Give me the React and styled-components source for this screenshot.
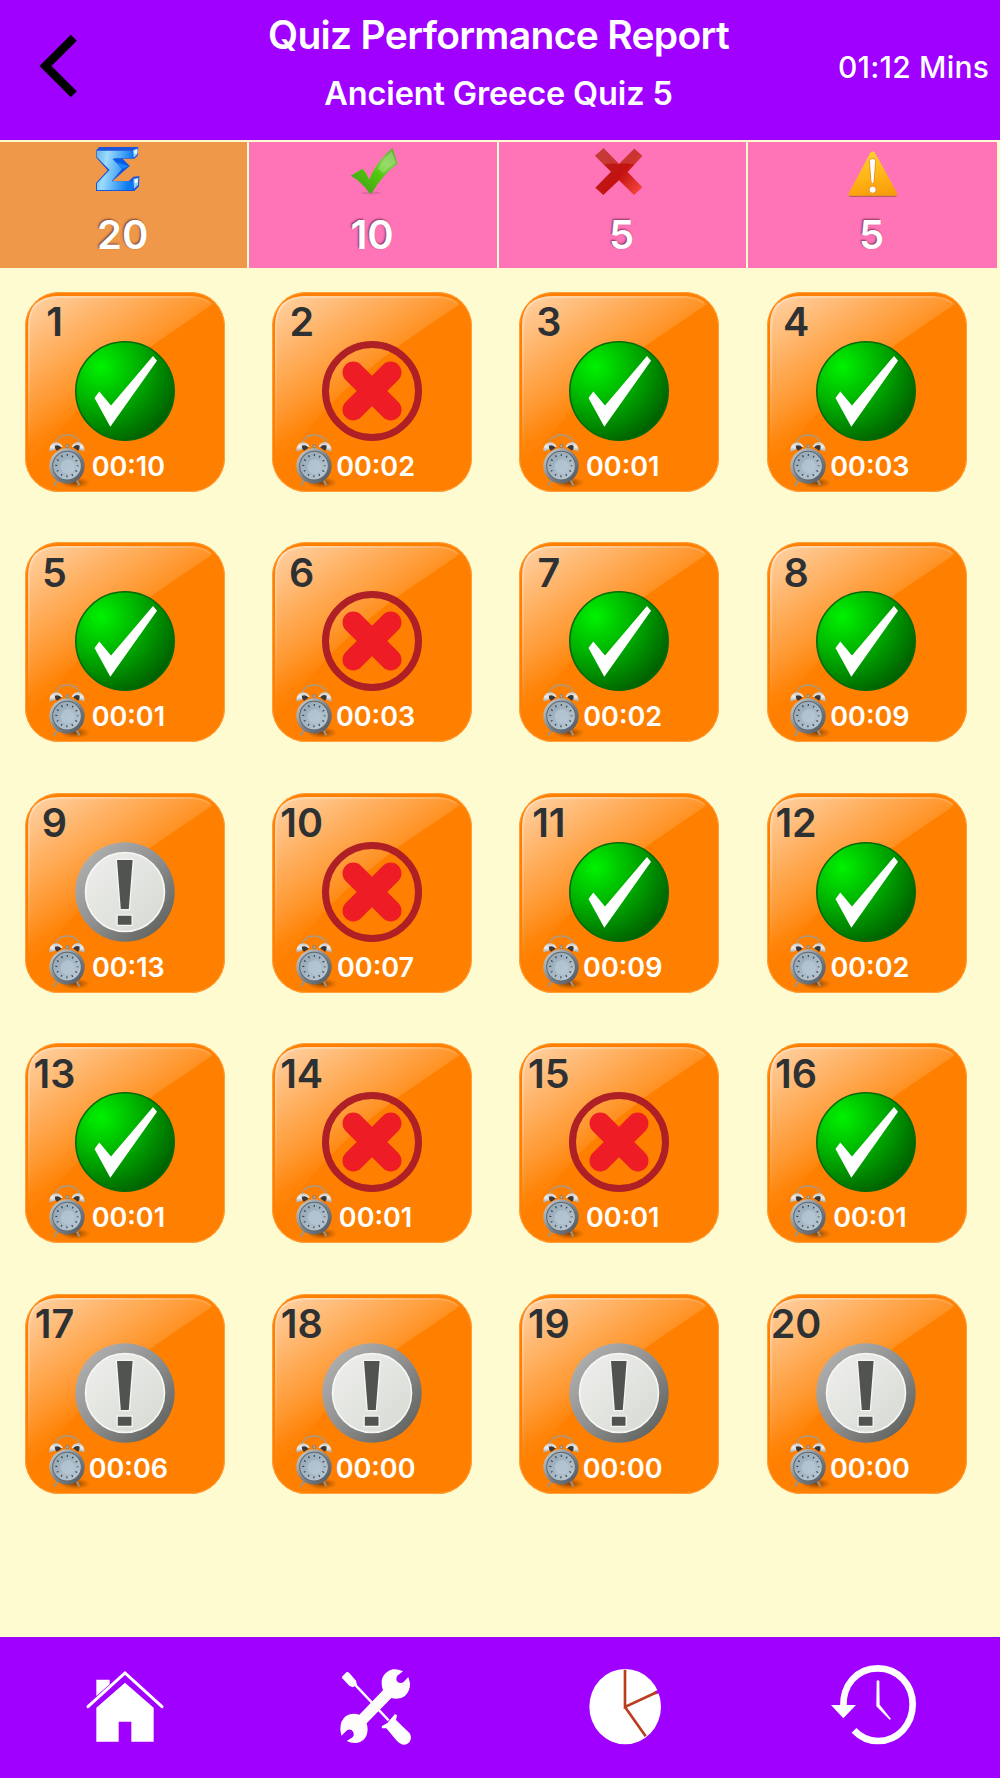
import React from 'react'
import styled, { createGlobalStyle } from 'styled-components';

const GlobalStyle = createGlobalStyle`
    * {
        box-sizing: border-box;
    }
    body {
        margin: 0;
        background-color: #fffbd1;
        font-family: Inter, "Liberation Sans", sans-serif;
    }
`;

const Page = styled.div`
    width: 1000px;
    height: 1778px;
    display: flex;
    flex-direction: column;
    overflow: hidden;
    background-color: #fffbd1;
`;

const Header = styled.header`
    height: 140px;
    flex-shrink: 0;
    display: grid;
    grid-template-columns: 250px 1fr 250px;
    background-color: #a000ff;
    color: white;
`;

const BackButton = styled.div`
    padding: 34px 0 0 38px;

    svg {
        display: block;
    }
`;

const Titles = styled.div`
    display: flex;
    flex-direction: column;
    align-items: center;
    padding: 11px 3px 0 0;
    white-space: nowrap;
`;

const Title = styled.h1`
    margin: 0;
    font-size: 39px;
    line-height: 48px;
    font-weight: 600;
    letter-spacing: -0.7px;
`;

const Subtitle = styled.h2`
    margin: 11px 0 0;
    font-size: 32.5px;
    line-height: 48px;
    font-weight: 600;
    letter-spacing: -0.15px;
`;

const TotalTime = styled.div`
    padding: 49px 11px 0 0;
    font-size: 30px;
    line-height: 36px;
    font-weight: 550;
    letter-spacing: 0.2px;
    text-align: right;
    white-space: nowrap;
`;

const Stats = styled.div`
    width: 997px;
    height: 126px;
    margin-top: 2px;
    flex-shrink: 0;
    display: grid;
    grid-template-columns: repeat(3, 247.4px) 1fr;
    gap: 2px;
`;

const Stat = styled.div`
    display: flex;
    flex-direction: column;
    align-items: center;
    padding-top: 1px;
    background-color: ${props => (props.$active ? '#f0984a' : '#ff74b6')};

    svg {
        display: block;
        flex-shrink: 0;
    }
`;

const StatValue = styled.div`
    margin-top: 12px;
    margin-right: 2px;
    font-size: 40px;
    line-height: 48px;
    font-weight: 600;
    color: white;
    text-shadow: -1px -1px 2px rgba(60,20,40,0.65);
`;

const Grid = styled.main`
    flex: 1;
    display: grid;
    grid-template-columns: repeat(4, 200px);
    grid-auto-rows: 200px;
    column-gap: 47.2px;
    row-gap: 50.45px;
    padding: 24px 0 0 25px;
`;

const Card = styled.div`
    position: relative;
    display: flex;
    flex-direction: column;
    border-radius: 34px;
    overflow: hidden;
    background-color: #ff8000;
`;

const Gloss = styled.svg`
    position: absolute;
    top: 0;
    left: 0;
`;

const Number = styled.div`
    position: relative;
    width: 59px;
    height: 49px;
    padding-top: 6.3px;
    font-size: 39.5px;
    line-height: 48px;
    font-weight: 600;
    text-align: center;
    color: #2d3133;
`;

const Mark = styled.svg`
    position: relative;
    display: block;
    margin-left: 49.6px;
    flex-shrink: 0;
`;

const TimeRow = styled.div`
    position: relative;
    display: flex;
    margin-top: -9.3px;
    padding-left: 19.7px;
`;

const Time = styled.div`
    width: 90px;
    margin-left: -8px;
    padding-top: 19.2px;
    font-size: 27px;
    line-height: 32px;
    font-weight: 600;
    text-align: center;
    color: white;
    white-space: nowrap;
`;

const BottomNav = styled.nav`
    height: 141.5px;
    flex-shrink: 0;
    display: grid;
    grid-template-columns: repeat(4, 1fr);
    place-items: center;
    background-color: #a000ff;
`;

const SigmaIcon = () => (
    <svg width="60" height="56" viewBox="281 428 180 168">
        <path d="M288 449 L297 440 H414 L412 466 L402 475 H366 L388 497 L336 543 H385 L399 529 L417 527 L416 558 L402 572 H287 V548 L322 510 L288 472 Z" fill="#1a55dc" />
        <path d="M290 451 H397 V474 H342 L365 506 L334 543 H398 V569 H290 V549 L328 509 L290 471 Z" fill="url(#sigmaFace)" />
        <path d="M336 475 H366 L388 497 L370 510 Z" fill="#075ce8" />
        <path d="M348 486 L366 491 L384 498 L364 507 Z" fill="#1686fa" />
        <path d="M398 450 L412 444 L410 463 L400 472 Z M399 536 L414 532 L413 554 L401 565 Z" fill="#8ed4ff" />
        <path d="M402 451 l9 -3 v11 l-8 2 z M403 538 l9 -3 v11 l-8 3 z" fill="#f2fbff" />
        <defs>
            <linearGradient id="sigmaFace" x1="0" y1="0" x2="1" y2="0.2">
                <stop offset="0" stopColor="#67b8ed" />
                <stop offset="0.3" stopColor="#9bdcfb" />
                <stop offset="1" stopColor="#0b79ef" />
            </linearGradient>
        </defs>
    </svg>
);

const TickIcon = () => (
    <svg width="60" height="56" viewBox="1029 428 180 168">
        <ellipse cx="1113" cy="578" rx="32" ry="4" fill="#9a5080" opacity="0.3" />
        <path d="M1052 526 L1088 505 Q1100 518 1107 538 Q1132 478 1178 442 L1193 490 Q1148 522 1116 577 Q1109 583 1104 573 Q1082 542 1052 526 Z" fill="url(#tickFill)" />
        <path d="M1134 505 Q1150 474 1175 453 L1187 487 Q1166 501 1151 519 Z" fill="#c6f5a2" opacity="0.35" />
        <defs>
            <linearGradient id="tickFill" x1="1" y1="0" x2="0.3" y2="1">
                <stop offset="0" stopColor="#5aa835" />
                <stop offset="0.35" stopColor="#7ccc4a" />
                <stop offset="0.6" stopColor="#50c80a" />
                <stop offset="1" stopColor="#43a51a" />
            </linearGradient>
        </defs>
    </svg>
);

const CrossIcon = () => (
    <svg width="60" height="56" viewBox="277 428 180 168">
        <path d="M286 466 L312 444 L358 491 L404 445 L428 467 L384 515 L428 561 L403 584 L358 540 L311 584 L287 562 L334 514 Z" fill="url(#crossFill)" />
        <path d="M286 466 L312 444 L358 491 L404 445 L428 467 L405 492 Q360 485 312 492 Z" fill="#d7665c" opacity="0.4" />
        <defs>
            <linearGradient id="crossFill" x1="0" y1="0.2" x2="1" y2="1">
                <stop offset="0" stopColor="#b91f20" />
                <stop offset="0.5" stopColor="#c2120f" />
                <stop offset="1" stopColor="#ff4b43" />
            </linearGradient>
        </defs>
    </svg>
);

const WarningIcon = () => (
    <svg width="60" height="56" viewBox="1028 428 180 168">
        <path d="M1046 585 H1190 L1187 590 H1047 Z" fill="#a05a50" opacity="0.8" />
        <path d="M1110 457 Q1117 448 1124 457 L1190 578 Q1193 586 1184 586 H1050 Q1042 586 1046 577 Z" fill="url(#warnFill)" />
        <path d="M1107 480 Q1117 469 1126 480 L1121 545 Q1117 554 1112 545 Z" fill="white" stroke="#d87610" strokeWidth="2" />
        <circle cx="1117" cy="568" r="10.5" fill="white" stroke="#d87610" strokeWidth="2" />
        <defs>
            <linearGradient id="warnFill" x1="0.4" y1="0" x2="0.6" y2="1">
                <stop offset="0" stopColor="#ffd12c" />
                <stop offset="0.6" stopColor="#ffb314" />
                <stop offset="1" stopColor="#f79c0b" />
            </linearGradient>
        </defs>
    </svg>
);

const CardGloss = () => (
    <Gloss width="200" height="200" viewBox="0 0 200 200">
        <rect x="0.5" y="0.5" width="199" height="199" rx="33.5" fill="none" stroke="#ffa040" strokeWidth="1" />
        <path d="M3 34 Q3 4 34 4 H166 Q180 5 188 12 L132 50 Q80 88 50 122 Q25 150 3 174 Z" fill="url(#gloss)" />
        <path d="M4 165 V34 Q4 5 34 5 H166 Q178 5 185 11" fill="none" stroke="url(#glossEdge)" strokeWidth="2" />
    </Gloss>
);

// gradients used by every card
const CardDefs = () => (
    <svg width="0" height="0" style={{ position: 'absolute' }}>
        <defs>
            <linearGradient id="gloss" gradientUnits="userSpaceOnUse" x1="0" y1="0" x2="86.6" y2="130">
                <stop offset="0" stopColor="white" stopOpacity="0.68" />
                <stop offset="0.35" stopColor="white" stopOpacity="0.42" />
                <stop offset="0.67" stopColor="white" stopOpacity="0.19" />
                <stop offset="0.75" stopColor="white" stopOpacity="0.12" />
                <stop offset="0.84" stopColor="white" stopOpacity="0.04" />
                <stop offset="0.95" stopColor="white" stopOpacity="0" />
            </linearGradient>
            <linearGradient id="glossEdge" gradientUnits="userSpaceOnUse" x1="0" y1="5" x2="60" y2="140">
                <stop offset="0" stopColor="white" stopOpacity="0.3" />
                <stop offset="1" stopColor="white" stopOpacity="0" />
            </linearGradient>
            <radialGradient id="green" cx="0.26" cy="0.25" r="0.82">
                <stop offset="0" stopColor="#00f200" />
                <stop offset="0.45" stopColor="#00b400" />
                <stop offset="1" stopColor="#006200" />
            </radialGradient>
            <linearGradient id="ring" x1="0.1" y1="0.1" x2="0.9" y2="0.9">
                <stop offset="0" stopColor="#b0b0b0" />
                <stop offset="0.5" stopColor="#8e8f8e" />
                <stop offset="1" stopColor="#60625f" />
            </linearGradient>
            <linearGradient id="plate" x1="0" y1="0" x2="1" y2="1">
                <stop offset="0" stopColor="#efefed" />
                <stop offset="1" stopColor="#d6dad2" />
            </linearGradient>
            <linearGradient id="clockRim" x1="0" y1="0" x2="1" y2="1">
                <stop offset="0" stopColor="#d2d6da" />
                <stop offset="0.5" stopColor="#80868c" />
                <stop offset="1" stopColor="#4d5157" />
            </linearGradient>
            <linearGradient id="clockFace" x1="0" y1="0" x2="1" y2="1">
                <stop offset="0" stopColor="#90a4b2" />
                <stop offset="1" stopColor="#bccbd7" />
            </linearGradient>
            <linearGradient id="bell" x1="0" y1="0" x2="0" y2="1">
                <stop offset="0" stopColor="#c4c4c4" />
                <stop offset="0.5" stopColor="#eeeeee" />
                <stop offset="1" stopColor="#9ea2a6" />
            </linearGradient>
            <radialGradient id="clockShadow">
                <stop offset="0" stopColor="#5e2c00" stopOpacity="0.75" />
                <stop offset="1" stopColor="#7c3a00" stopOpacity="0" />
            </radialGradient>
        </defs>
    </svg>
);

const CorrectMark = () => (
    <Mark width="100" height="100" viewBox="0 0 100 100">
        <circle cx="50" cy="50" r="49.2" fill="url(#green)" stroke="#056a04" strokeWidth="1.6" />
        <path d="M19.5 57 L24.3 50.5 L36 64.5 L78 15 L82 19.7 L35.3 85.7 Z" fill="white" />
    </Mark>
);

const WrongMark = () => (
    <Mark width="100" height="100" viewBox="0 0 100 100">
        <circle cx="50" cy="50" r="46.5" fill="none" stroke="#ae1f26" strokeWidth="7" />
        <path d="M31.3 31.3 L68.7 68.7 M68.7 31.3 L31.3 68.7" stroke="#ee1d25" strokeWidth="21.6" strokeLinecap="round" />
    </Mark>
);

const SkippedMark = () => (
    <Mark width="100" height="100" viewBox="0 0 100 100">
        <circle cx="50" cy="50" r="49.7" fill="url(#ring)" />
        <circle cx="50" cy="50" r="39.5" fill="url(#plate)" stroke="#f6f7f4" strokeWidth="1.6" />
        <path d="M42 18 H57.6 L53.8 67 H45.8 Z M42.8 73.7 H56.5 V82.8 H42.8 Z" fill="#50534f" stroke="#f5f6f3" strokeWidth="2.6" paintOrder="stroke" />
    </Mark>
);

const MARKS = {
    correct: CorrectMark,
    wrong: WrongMark,
    skipped: SkippedMark,
};

const ClockIcon = () => (
    <svg width="46.7" height="56.7" viewBox="105 455 140 170">
        <ellipse cx="195" cy="607" rx="46" ry="17" fill="url(#clockShadow)" />
        <path d="M136 487 Q144 464 171 464 Q200 464 209 487" fill="none" stroke="#a99a84" strokeWidth="4" />
        <path d="M144 596 L133 614 M198 596 L207 613" stroke="#9a948c" strokeWidth="6" strokeLinecap="round" />
        <path d="M118 514 Q117 488 138 486 Q152 486 158 499 Z M185 499 Q190 486 205 485 Q223 488 224 514 Z" fill="url(#bell)" />
        <path d="M134 496 Q148 491 155 502 L141 511 Q134 505 134 496 Z M189 501 Q198 491 209 496 Q210 505 204 511 Z" fill="#3c3838" />
        <circle cx="172" cy="497" r="5" fill="#b9a58c" stroke="#77716b" strokeWidth="2" />
        <circle cx="171" cy="557" r="53" fill="url(#clockRim)" />
        <circle cx="171" cy="556" r="43" fill="url(#clockFace)" stroke="#5d6870" strokeWidth="3" />
        <circle cx="171" cy="556" r="32" fill="none" stroke="#38444c" strokeWidth="6" strokeDasharray="3.5 13.25" strokeDashoffset="1.7" />
        <circle cx="173" cy="558" r="21" fill="#b7c8d5" opacity="0.7" />
    </svg>
);

const HomeIcon = () => (
    <svg width="90" height="90" viewBox="60 66 270 270">
        <path d="M109 119 H149 V133 L109 168 Z M195 128 L281 203 V305 H214 V245 H176 V305 H109 V203 Z" fill="white" />
        <path d="M84 200 L195 99 L306 200" fill="none" stroke="white" strokeWidth="9" strokeLinecap="round" />
    </svg>
);

const ToolsIcon = () => (
    <svg width="90" height="90" viewBox="810 66 270 270">
        <path d="M885 134 L986 241" stroke="white" strokeWidth="7" />
        <path d="M846 110 L860 96 Q864 95 868 99 L888 122 L891 135 L878 142 L868 137 L847 115 Z" fill="white" />
        <path d="M1005 222 L1011 226 L1008 240 L1049 280 Q1056 291 1050 304 Q1043 315 1029 314 Q1019 312 1011 303 L979 265 L966 265 L965 259 L982 249 Z" fill="white" />
        <path d="M1029 94 Q1013 86 998 88 Q976 94 967 114 Q962 130 969 151 L898 224 Q876 217 858 228 Q840 241 841 270 L844 287 L862 270 Q873 266 880 276 Q884 285 878 292 L860 303 Q872 310 889 309 Q909 306 919 288 Q926 271 920 250 L994 174 Q1017 181 1035 168 Q1051 153 1050 130 L1045 111 L1030 127 Q1020 132 1012 125 Q1006 117 1012 107 Z" fill="#fffdfc" />
    </svg>
);

const PieIcon = () => (
    <svg width="90" height="90" viewBox="60 66 270 270">
        <ellipse cx="195.5" cy="200" rx="107.5" ry="113" fill="white" />
        <path d="M285 159 L302 152" stroke="#a000ff" strokeWidth="10" />
        <path d="M195 89 V201 L290 157 M195 201 L257 289" fill="none" stroke="#bb3d20" strokeWidth="8" />
    </svg>
);

const HistoryIcon = () => (
    <svg width="90" height="90" viewBox="810 66 270 270">
        <path d="M850 200 C848 135 890 85 954 85 C1014 85 1058 134 1058 193 C1058 253 1014 303 954 303 C926 303 902 292 882 271" fill="none" stroke="white" strokeWidth="20" />
        <path d="M813 195 H888 L850 235 Z" fill="white" />
        <path d="M950 123 Q954 119 958 123 L959 194 L993 237 L989 239 L949 199 Z" fill="white" />
    </svg>
);

const questions = [
    { result: 'correct', time: '00:10' },
    { result: 'wrong', time: '00:02' },
    { result: 'correct', time: '00:01' },
    { result: 'correct', time: '00:03' },
    { result: 'correct', time: '00:01' },
    { result: 'wrong', time: '00:03' },
    { result: 'correct', time: '00:02' },
    { result: 'correct', time: '00:09' },
    { result: 'skipped', time: '00:13' },
    { result: 'wrong', time: '00:07' },
    { result: 'correct', time: '00:09' },
    { result: 'correct', time: '00:02' },
    { result: 'correct', time: '00:01' },
    { result: 'wrong', time: '00:01' },
    { result: 'wrong', time: '00:01' },
    { result: 'correct', time: '00:01' },
    { result: 'skipped', time: '00:06' },
    { result: 'skipped', time: '00:00' },
    { result: 'skipped', time: '00:00' },
    { result: 'skipped', time: '00:00' },
];

const QuestionCard = ({ number, item }) => {
  const ResultMark = MARKS[item.result];
  return (
    <Card>
        <CardGloss/>
        <Number>{number}</Number>
        <ResultMark/>
        <TimeRow>
            <ClockIcon/>
            <Time>{item.time}</Time>
        </TimeRow>
    </Card>
  )
}

const App = () => {
  return (
    <Page>
        <GlobalStyle/>
        <CardDefs/>
        <Header>
            <BackButton>
                <svg width="40" height="64" viewBox="0 0 40 64">
                    <path d="M35.8 3.8 L7.5 32 L35.8 60.2" fill="none" stroke="black" strokeWidth="8.5" />
                </svg>
            </BackButton>
            <Titles>
                <Title>Quiz Performance Report</Title>
                <Subtitle>Ancient Greece Quiz 5</Subtitle>
            </Titles>
            <TotalTime>01:12 Mins</TotalTime>
        </Header>
        <Stats>
            <Stat $active>
                <SigmaIcon/>
                <StatValue>20</StatValue>
            </Stat>
            <Stat>
                <TickIcon/>
                <StatValue>10</StatValue>
            </Stat>
            <Stat>
                <CrossIcon/>
                <StatValue>5</StatValue>
            </Stat>
            <Stat>
                <WarningIcon/>
                <StatValue>5</StatValue>
            </Stat>
        </Stats>
        <Grid>
            {questions.map((item, i) => (
                <QuestionCard key={i} number={i + 1} item={item}/>
            ))}
        </Grid>
        <BottomNav>
            <HomeIcon/>
            <ToolsIcon/>
            <PieIcon/>
            <HistoryIcon/>
        </BottomNav>
    </Page>
  )
}

export default App
